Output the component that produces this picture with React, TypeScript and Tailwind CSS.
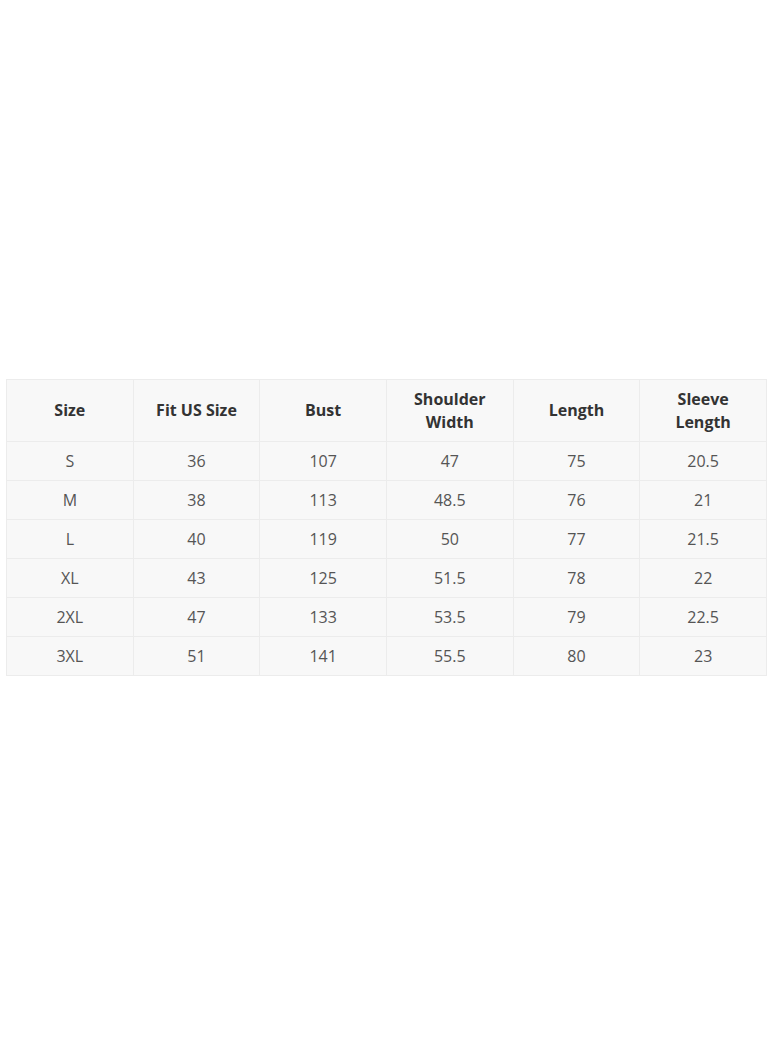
import React from 'react';

const headers = ['Size', 'Fit US Size', 'Bust', 'Shoulder Width', 'Length', 'Sleeve Length'];

const rows: string[][] = [
  ['S', '36', '107', '47', '75', '20.5'],
  ['M', '38', '113', '48.5', '76', '21'],
  ['L', '40', '119', '50', '77', '21.5'],
  ['XL', '43', '125', '51.5', '78', '22'],
  ['2XL', '47', '133', '53.5', '79', '22.5'],
  ['3XL', '51', '141', '55.5', '80', '23'],
];

const App: React.FC = () => {
  return (
    <div className="w-[772px] h-[1052px] bg-white pt-[379px] px-[6px] font-['Open_Sans','Liberation_Sans',sans-serif]">
      <table className="w-[761px] table-fixed border-collapse bg-[#f8f8f8]">
        <thead>
          <tr className="h-[62px]">
            {headers.map((h) => (
              <th
                key={h}
                className="border border-[#ececec] px-[20px] text-center text-[16px] leading-[23px] font-bold text-[#333]"
              >
                {h}
              </th>
            ))}
          </tr>
        </thead>
        <tbody>
          {rows.map((r) => (
            <tr key={r[0]} className="h-[39px]">
              {r.map((c, i) => (
                <td
                  key={i}
                  className="border border-[#ececec] text-center text-[16px] text-[#555]"
                >
                  {c}
                </td>
              ))}
            </tr>
          ))}
        </tbody>
      </table>
    </div>
  );
};

export default App;
